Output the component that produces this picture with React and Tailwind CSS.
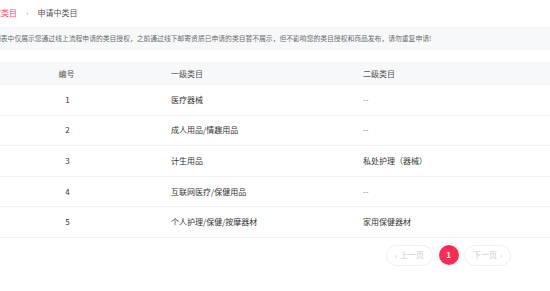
const rows = [
  { id: 1, first: "医疗器械", second: "--" },
  { id: 2, first: "成人用品/情趣用品", second: "--" },
  { id: 3, first: "计生用品", second: "私处护理（器械）" },
  { id: 4, first: "互联网医疗/保健用品", second: "--" },
  { id: 5, first: "个人护理/保健/按摩器材", second: "家用保健器材" },
];

export default function App() {
  return (
    <div className="w-[550px] h-[291px] overflow-hidden bg-white font-['Noto_Sans_CJK_SC',sans-serif]">
      {/* breadcrumb */}
      <div className="h-[25px] mb-[2px] flex items-center text-[8px] ml-[-15px]">
        <span className="text-[#fe4a6a]">授权类目</span>
        <span className="mx-[9px] text-[#aaa] text-[8px]">›</span>
        <span className="text-[#555]">申请中类目</span>
      </div>

      {/* notice */}
      <div className="h-[23px] bg-[#f7f8fa] flex items-center">
        <p className="ml-[-6px] text-[6.8px] text-[#6b6b6b] whitespace-nowrap">
          列表中仅展示您通过线上流程申请的类目授权，之前通过线下邮寄资质已申请的类目暂不展示，但不影响您的类目授权和商品发布，请勿重复申请!
        </p>
      </div>

      {/* table */}
      <div className="mt-[12px] text-[8px]">
        <div className="h-[23px] bg-[#f7f8fa] flex items-center text-[#555]">
          <div className="w-[133px] text-center">编号</div>
          <div className="w-[230px] pl-[38px]">一级类目</div>
          <div className="flex-1">二级类目</div>
        </div>
        {rows.map((r) => (
          <div
            key={r.id}
            className="h-[30.6px] border-b border-[#f2f2f2] flex items-center text-[#333]"
          >
            <div className="w-[133px] text-center pl-[2px]">{r.id}</div>
            <div className="w-[230px] pl-[38px]">{r.first}</div>
            <div className={r.second === "--" ? "flex-1 text-[#888]" : "flex-1"}>{r.second}</div>
          </div>
        ))}
      </div>

      {/* pagination */}
      <div className="mt-[7px] flex justify-end items-center pr-[39px] gap-[5.5px] text-[8px]">
        <button className="w-[47px] h-[21px] rounded-full border border-[#f0f0f0] flex items-center justify-center gap-[3px] text-[#ccc]">
          <span className="text-[7px]">‹</span>
          <span>上一页</span>
        </button>
        <button className="w-[20px] h-[20px] rounded-full bg-[#fe2c55] text-white font-bold flex items-center justify-center">
          1
        </button>
        <button className="w-[47px] h-[21px] rounded-full border border-[#f0f0f0] flex items-center justify-center gap-[3px] text-[#ccc]">
          <span>下一页</span>
          <span className="text-[7px]">›</span>
        </button>
      </div>
    </div>
  );
}
